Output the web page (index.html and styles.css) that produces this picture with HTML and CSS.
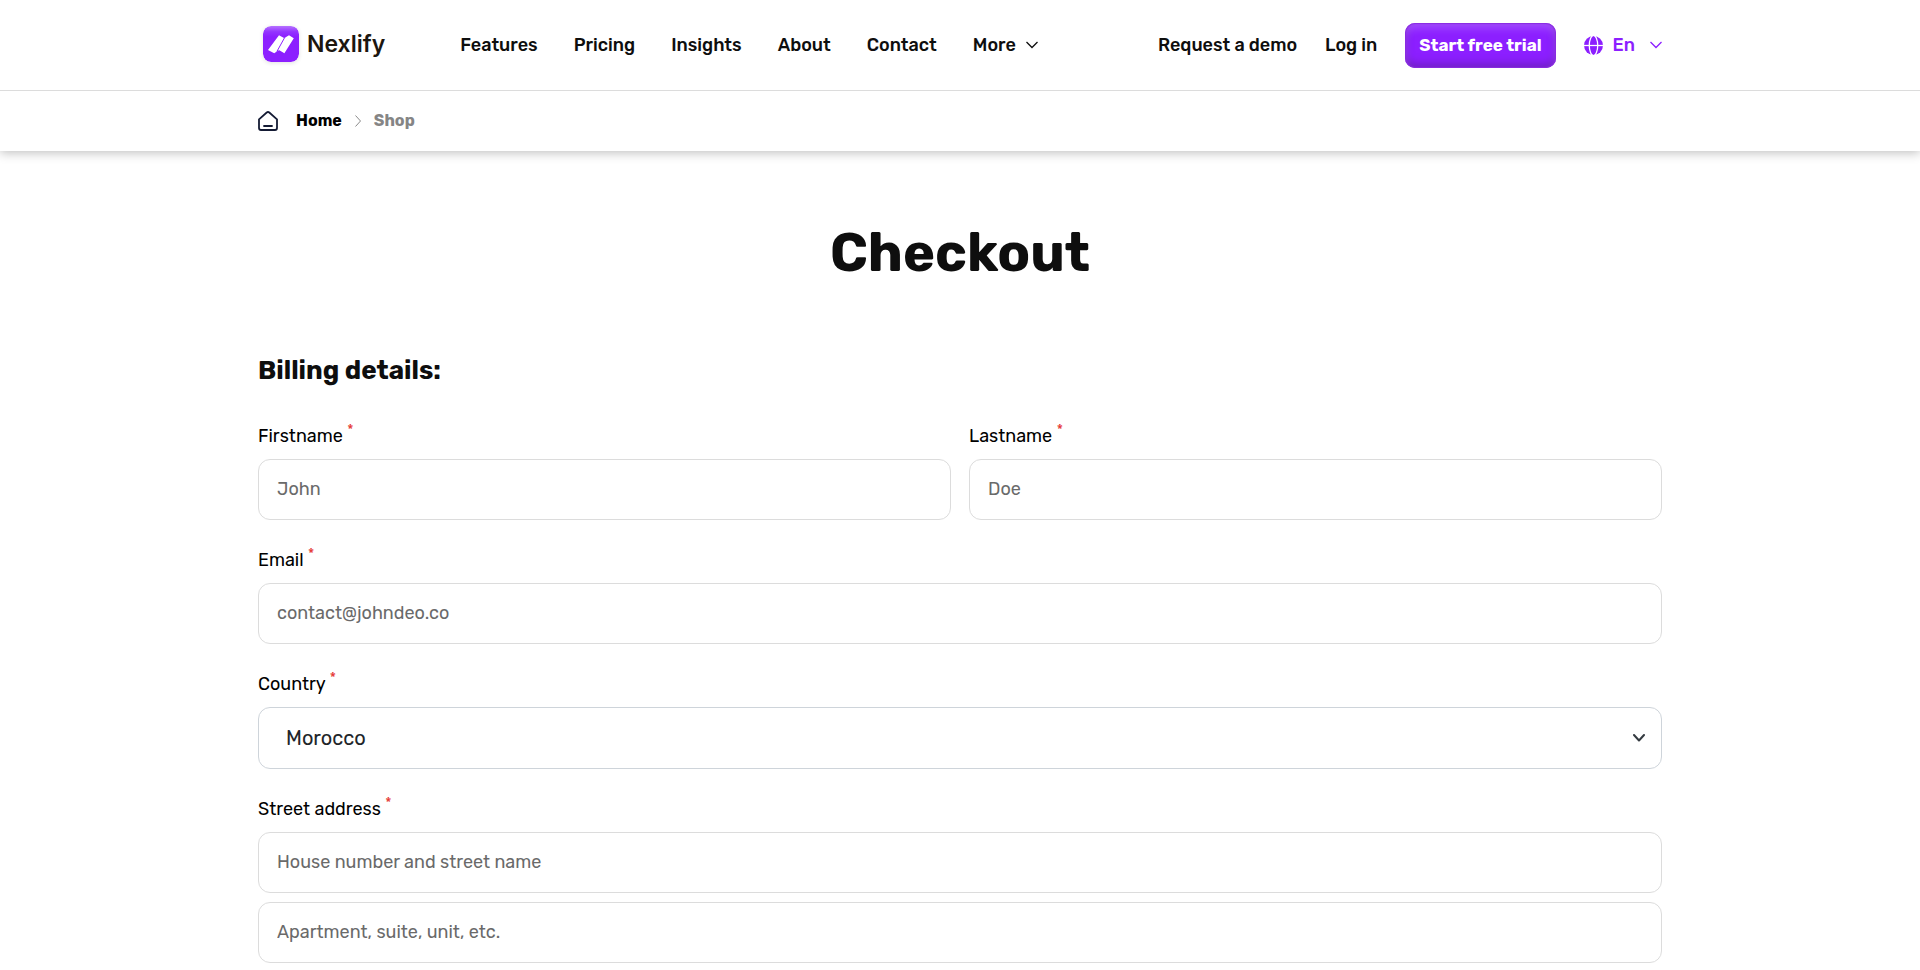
FILE: index.html
```html
<!DOCTYPE html>
<html lang="en">
<head>
<meta charset="utf-8">
<meta name="viewport" content="width=device-width, initial-scale=1">
<title>Checkout - Nexlify</title>
<link rel="stylesheet" href="styles.css">
</head>
<body>
<header class="header">
  <div class="container header-row">
    <a class="logo" href="#">
      <svg class="logo-mark" viewBox="0 0 36 36" aria-hidden="true">
        <defs>
          <linearGradient id="mark" x1="0" y1="0" x2="0" y2="1">
            <stop offset="0" stop-color="#b672ff"/>
            <stop offset="0.16" stop-color="#9433ff"/>
            <stop offset="0.3" stop-color="#8c1fff"/>
            <stop offset="1" stop-color="#8c1fff"/>
          </linearGradient>
        </defs>
        <rect width="36" height="36" rx="8" fill="url(#mark)"/>
        <path d="M16 9.2 21 12 22.200 11.400 26 9.200 30.800 12.300 21.400 27.200 16.300 24.200 15.300 24.400 11.200 27.200 5 23.900Z" fill="#fff"/>
        <path d="M21.800 11.300 13.900 25.500" stroke="#8c1fff" stroke-width="1" fill="none"/>
      </svg>
      <span>Nexlify</span>
    </a>
    <nav class="nav" aria-label="Main">
      <a href="#">Features</a>
      <a href="#">Pricing</a>
      <a href="#">Insights</a>
      <a href="#">About</a>
      <a href="#">Contact</a>
      <button class="menu-button" type="button">More
        <svg class="chevron" viewBox="0 0 12 8" aria-hidden="true"><path d="M.5 1 6 6.500 11.500 1"/></svg>
      </button>
    </nav>
    <div class="actions">
      <a href="#">Request a demo</a>
      <a href="#">Log in</a>
      <a class="cta" href="#">Start free trial</a>
      <button class="menu-button language" type="button">
        <svg class="globe" viewBox="0 0 18 18" aria-hidden="true">
          <circle cx="9" cy="9" r="9" fill="#8c1fff"/>
          <ellipse cx="9" cy="9" rx="4" ry="9.500" fill="none" stroke="#fff" stroke-width="1.200"/>
          <path d="M0 9h18" stroke="#fff" stroke-width="1.200"/>
        </svg>
        <span>En</span>
        <svg class="chevron" viewBox="0 0 12 8" aria-hidden="true"><path d="M.5 1 6 6.500 11.500 1"/></svg>
      </button>
    </div>
  </div>
</header>
<nav class="breadcrumb" aria-label="Breadcrumb">
  <div class="container breadcrumb-row">
    <svg class="home-icon" viewBox="0 0 20 20" aria-hidden="true"><path d="M1 8.300 8.700 1.500Q10 .5 11.300 1.500L19 8.300V17Q19 19 17 19H3Q1 19 1 17ZM6 15h8"/></svg>
    <a href="#">Home</a>
    <svg class="separator" viewBox="0 0 6 12" aria-hidden="true"><path d="M.5 .5 5.500 6 .5 11.500"/></svg>
    <span class="current" aria-current="page">Shop</span>
  </div>
</nav>
<main class="container main">
  <h1>Checkout</h1>
  <form class="billing">
    <h2>Billing details:</h2>
    <div class="fields">
      <div class="name-row">
        <div class="field">
          <label for="first">Firstname <span class="required">*</span></label>
          <input id="first" type="text" placeholder="John" required>
        </div>
        <div class="field">
          <label for="last">Lastname <span class="required">*</span></label>
          <input id="last" type="text" placeholder="Doe" required>
        </div>
      </div>
      <div class="field">
        <label for="email">Email <span class="required">*</span></label>
        <input id="email" type="email" placeholder="contact@johndeo.co" required>
      </div>
      <div class="field">
        <label for="country">Country <span class="required">*</span></label>
        <div class="select-wrap">
          <select id="country"><option>Morocco</option></select>
          <svg class="select-arrow" viewBox="0 0 12 8" aria-hidden="true"><path d="M1 1 6 6.500 11 1"/></svg>
        </div>
      </div>
      <div class="field">
        <label for="street">Street address <span class="required">*</span></label>
        <div class="address">
          <input id="street" type="text" placeholder="House number and street name" required>
          <input type="text" placeholder="Apartment, suite, unit, etc." aria-label="Apartment, suite, unit, etc.">
        </div>
      </div>
    </div>
  </form>
</main>
</body>
</html>
```
FILE: styles.css
```css
*, *::before, *::after { box-sizing: border-box; }

body {
  margin: 0;
  background: #fff;
  color: #0e0e0e;
  font-family: Rubik, Roboto, sans-serif;
  font-size: 18px;
  line-height: 24px;
}

a { color: inherit; text-decoration: none; }

.container {
  width: 100%;
  max-width: 1436px;
  margin: 0 auto;
  padding: 0 16px;
}

.header {
  position: relative;
  z-index: 1;
  border-bottom: 1px solid #dcdcdc;
  background: #fff;
}

.header-row {
  display: flex;
  align-items: center;
  height: 90px;
  font-weight: 500;
  white-space: nowrap;
}

.logo {
  display: flex;
  align-items: center;
  gap: 8px;
  padding: 0 5px 3px;
  margin-right: 70px;
  color: #1c160f;
  font-family: Inter, sans-serif;
  font-size: 23px;
  font-weight: 600;
}

.logo-mark {
  width: 36px;
  height: 36px;
  border-radius: 8px;
  box-shadow: 0 1px 4px rgba(0, 0, 0, .12);
}

.nav { display: flex; gap: 36px; }

.menu-button {
  display: flex;
  align-items: center;
  gap: 10px;
  padding: 0;
  border: 0;
  background: none;
  color: inherit;
  font: inherit;
  cursor: pointer;
}

.chevron {
  width: 12px;
  height: 8px;
  fill: none;
  stroke: currentColor;
  stroke-width: 1.3;
}

.actions {
  display: flex;
  align-items: center;
  gap: 28px;
  margin-left: auto;
}

.cta {
  padding: 10px 14px 11px;
  border-radius: 10px;
  background: #8c1fff;
  box-shadow: inset 0 0 1px 1px #8a2be2, inset 0 5px 8px rgba(255, 255, 255, .22), inset 0 -4px 8px rgba(80, 30, 130, .5);
  color: #fff;
  font-size: 17px;
  font-weight: 700;
}

.language { color: #8c1fff; }

.language .chevron { margin-left: 5px; }

.globe { width: 19px; height: 19px; }

.breadcrumb { box-shadow: 0 2px 10px rgba(0, 0, 0, .25); }

.breadcrumb-row {
  display: flex;
  align-items: center;
  height: 60px;
  font-size: 16px;
  font-weight: 700;
}

.breadcrumb a { color: #000; }

.home-icon {
  width: 20px;
  height: 20px;
  margin-right: 18px;
  fill: none;
  stroke: #141b34;
  stroke-width: 1.8;
  stroke-linecap: round;
}

.separator {
  width: 6px;
  height: 12px;
  margin: 0 13px;
  fill: none;
  stroke: #8a8a8a;
}

.current { color: #858585; }

.main { padding-top: 68px; padding-bottom: 48px; }

h1 {
  margin: 0;
  font-size: 54px;
  line-height: 68px;
  text-align: center;
}

h2 {
  margin: 64px 0 33px;
  font-size: 26px;
  line-height: 40px;
}

.fields { display: grid; gap: 28px; }

.name-row {
  display: grid;
  grid-template-columns: 1fr 1fr;
  gap: 18px;
}

.field { display: grid; gap: 11px; }

.field label { color: #000; }

.required {
  color: #e53935;
  font-size: 14px;
  line-height: 0;
  vertical-align: super;
}

input, select {
  display: block;
  width: 100%;
  border: 1px solid #dcdcdc;
  border-radius: 12px;
  background: #fff;
  font: inherit;
}

input { height: 61px; padding: 0 18px 2px; }

input::placeholder { color: #6a6a6a; opacity: 1; }

.address { display: grid; gap: 9px; }

.select-wrap { position: relative; }

select {
  height: 62px;
  padding: 0 27px;
  border-color: #ced4da;
  color: #212529;
  font-size: 20px;
  appearance: none;
}

.select-arrow {
  position: absolute;
  top: 27px;
  right: 17px;
  width: 12px;
  height: 8px;
  fill: none;
  stroke: #343a40;
  stroke-width: 2;
  stroke-linecap: round;
  stroke-linejoin: round;
  pointer-events: none;
}
```
